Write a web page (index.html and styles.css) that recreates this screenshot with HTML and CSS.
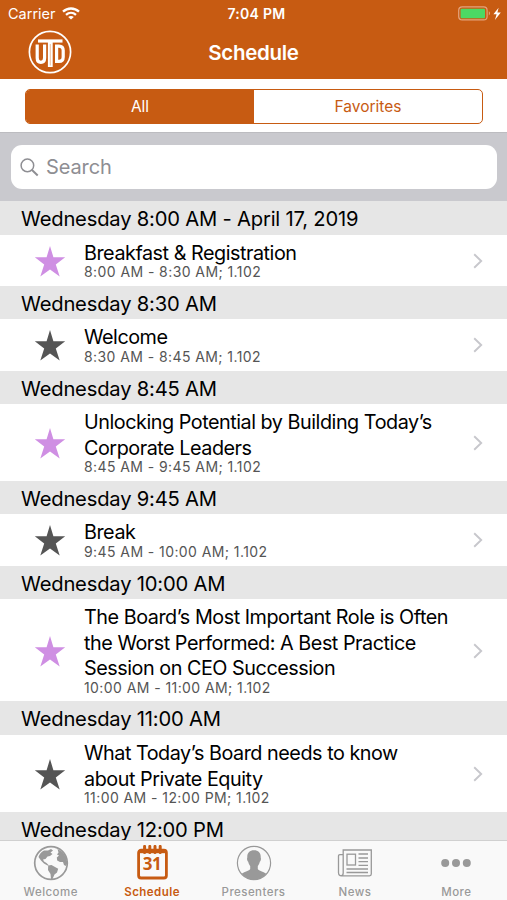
FILE: index.html
```html
<!DOCTYPE html>
<html lang="en">
  <head>
    <meta charset="UTF-8" />
    <meta name="viewport" content="width=device-width, initial-scale=1.0" />
    <title>Schedule</title>
    <link rel="stylesheet" href="styles.css">
  </head>
  <body>
    <!-- shared icons -->
    <svg class="sprite" width="0" height="0">
      <symbol id="star" viewBox="0 0 32 32">
        <path d="M16 1 L19.4 12.2 H31.2 L21.8 19.4 L25.7 31.6 L16 24.4 L6.3 31.6 L10.2 19.4 L0.8 12.2 H12.6 Z" fill="currentColor" />
      </symbol>
      <symbol id="chevron" viewBox="0 0 10 16">
        <path d="M1.2 1.2 L8.2 8 L1.2 14.8" fill="none" stroke="currentColor" stroke-width="1.9" />
      </symbol>
    </svg>

    <header class="header">
      <div class="status-bar">
        <div class="carrier">
          <span>Carrier</span>
          <svg width="18" height="13" viewBox="0 0 18 13" fill="none" stroke="#fff" stroke-width="2.3">
            <path d="M1 4.7 C5.5 0.4 12.5 0.4 17 4.7" />
            <path d="M4 7.9 C7 5.2 11 5.2 14 7.9" />
            <path d="M9 12.6 L6.2 9.9 C7.8 8.6 10.2 8.6 11.8 9.9 Z" fill="#fff" stroke="none" />
          </svg>
        </div>
        <span class="clock">7:04 PM</span>
        <div class="battery">
          <svg width="44" height="15" viewBox="0 0 44 15">
            <rect x="0.7" y="0.9" width="28.4" height="13" rx="3.5" fill="none" stroke="#e3a47d" stroke-width="1.2" />
            <rect x="2.6" y="2.8" width="24.4" height="9.4" rx="1" fill="#4cd964" />
            <path d="M30.8 5.3 C32.4 6 32.4 8.8 30.8 9.5 Z" fill="#e3a47d" />
            <path d="M40.6 1.7 L35.4 8.3 H38.6 L36.9 13.9 L42.8 6.4 H39.4 Z" fill="#fff" />
          </svg>
        </div>
      </div>
      <div class="nav-bar">
        <svg class="logo" width="44" height="44" viewBox="0 0 44 44" fill="none" stroke="#fff">
          <circle cx="22" cy="22" r="20.6" stroke-width="1.7" />
          <path d="M9.2 14.5 V28 Q9.2 32.3 12.9 32.3 Q16.6 32.3 16.6 28 V14.5" stroke-width="3.2" />
          <path d="M28.6 16.1 H31 Q35.2 16.1 35.2 20.5 V27 Q35.2 31.4 31 31.4 H28.6 Z" stroke-width="3.2" />
          <path d="M10 11 H34.5" stroke-width="3.2" />
          <path d="M22.3 11 V37" stroke-width="4.8" />
          <path d="M22.3 14 V35.5" stroke="#c75b12" stroke-width="0.4" />
        </svg>
        <h1>Schedule</h1>
      </div>
    </header>

    <div class="filter">
      <div class="segments">
        <button class="segment active">All</button>
        <button class="segment">Favorites</button>
      </div>
    </div>

    <div class="search">
      <div class="search-field">
        <svg width="19" height="19" viewBox="0 0 19 19" fill="none" stroke="#8e8e93">
          <circle cx="7.4" cy="7.4" r="6.3" stroke-width="1.5" />
          <path d="M12 12 L17.7 17.5" stroke-width="2" />
        </svg>
        <span>Search</span>
      </div>
    </div>

    <main class="schedule">
      <h2>Wednesday 8:00 AM - April 17, 2019</h2>
      <div class="session">
        <svg class="star favorite"><use href="#star" /></svg>
        <div class="details">
          <h3>Breakfast &amp; Registration</h3>
          <p>8:00 AM - 8:30 AM; 1.102</p>
        </div>
        <svg class="chevron"><use href="#chevron" /></svg>
      </div>

      <h2>Wednesday 8:30 AM</h2>
      <div class="session">
        <svg class="star"><use href="#star" /></svg>
        <div class="details">
          <h3>Welcome</h3>
          <p>8:30 AM - 8:45 AM; 1.102</p>
        </div>
        <svg class="chevron"><use href="#chevron" /></svg>
      </div>

      <h2>Wednesday 8:45 AM</h2>
      <div class="session">
        <svg class="star favorite"><use href="#star" /></svg>
        <div class="details">
          <h3>Unlocking Potential by Building Today’s<br>Corporate Leaders</h3>
          <p>8:45 AM - 9:45 AM; 1.102</p>
        </div>
        <svg class="chevron"><use href="#chevron" /></svg>
      </div>

      <h2>Wednesday 9:45 AM</h2>
      <div class="session">
        <svg class="star"><use href="#star" /></svg>
        <div class="details">
          <h3>Break</h3>
          <p>9:45 AM - 10:00 AM; 1.102</p>
        </div>
        <svg class="chevron"><use href="#chevron" /></svg>
      </div>

      <h2>Wednesday 10:00 AM</h2>
      <div class="session">
        <svg class="star favorite"><use href="#star" /></svg>
        <div class="details">
          <h3>The Board’s Most Important Role is Often<br>the Worst Performed: A Best Practice<br>Session on CEO Succession</h3>
          <p>10:00 AM - 11:00 AM; 1.102</p>
        </div>
        <svg class="chevron"><use href="#chevron" /></svg>
      </div>

      <h2>Wednesday 11:00 AM</h2>
      <div class="session">
        <svg class="star"><use href="#star" /></svg>
        <div class="details">
          <h3>What Today’s Board needs to know<br>about Private Equity</h3>
          <p>11:00 AM - 12:00 PM; 1.102</p>
        </div>
        <svg class="chevron"><use href="#chevron" /></svg>
      </div>

      <h2>Wednesday 12:00 PM</h2>
    </main>

    <nav class="tab-bar">
      <a class="tab">
        <svg width="36" height="36" viewBox="0 0 36 36">
          <circle cx="18" cy="18" r="16.3" fill="none" stroke="currentColor" stroke-width="1.7" />
          <path d="M5.5 12 C6.5 9 8 7 11 5.5 L15 5.5 L18 4 L20 5.5 L17.5 7.5 L19.5 9 L17 11 L14.5 11.5 L12.5 14 L10 14.5 L11 16.5 L13.5 18 L16 20.5 L14.5 20.5 L11 18.5 L8 15.5 Z" fill="currentColor" />
          <path d="M15.2 20.5 L18.5 20 L22 22 L25.2 23.8 L24 27.5 L21.5 29.5 L19.5 34 L18 34 L17.5 29 L15 25 Z" fill="currentColor" />
          <path d="M24.5 4 L29.5 7 L33 12 L34.3 18 L33 21 L31 20 L30 17 L27 17 L24.2 15.5 L23.8 12.5 L26 10.5 L24 9.5 L25.5 7.5 Z" fill="currentColor" />
        </svg>
        <span>Welcome</span>
      </a>
      <a class="tab active">
        <svg width="36" height="36" viewBox="0 0 36 36">
          <rect x="4.6" y="5.2" width="27.8" height="27.8" rx="2.5" fill="none" stroke="currentColor" stroke-width="2.8" />
          <path d="M4.6 5.5 H32 V8.2 H4.6 Z" fill="currentColor" />
          <path d="M10.6 1.4 V7.4 M15.8 1.4 V7.4 M21 1.4 V7.4 M26.2 1.4 V7.4" stroke="currentColor" stroke-width="3" stroke-linecap="round" />
          <text x="18" y="25.4" text-anchor="middle" class="calendar-day">31</text>
        </svg>
        <span>Schedule</span>
      </a>
      <a class="tab">
        <svg width="36" height="36" viewBox="0 0 36 36">
          <circle cx="18" cy="18" r="16.6" fill="none" stroke="currentColor" stroke-width="1.2" />
          <path d="M18 5.3 C22.5 5.3 25 8 24.7 12.5 C25.3 13.5 24.8 16 23.8 16.8 C23.3 19 22.6 20 21.8 21 V24 C23 26 27 26.5 30.3 28.7 C27.5 32.2 23 34.5 18 34.5 C13 34.5 8.5 32.2 5.7 28.7 C9 26.5 13 26 14.2 24 V21 C13.4 20 12.7 19 12.2 16.8 C11.2 16 10.7 13.5 11.3 12.5 C11 8 13.5 5.3 18 5.3 Z" fill="currentColor" />
        </svg>
        <span>Presenters</span>
      </a>
      <a class="tab">
        <svg width="36" height="36" viewBox="0 0 36 36" fill="none" stroke="currentColor" stroke-width="1.3">
          <path d="M6 9.6 H2.9 Q1.5 9.6 1.5 11 V27.5 Q1.5 30.8 4.5 30.8 H32.5 Q34.3 30.8 34.3 29 V5 H6.2 V28 Q6.2 30.8 4 30.8" />
          <rect x="10" y="9.2" width="8.5" height="10.8" />
          <path d="M21.5 9 H31 M21.5 13 H31 M21.5 16.7 H31 M21.5 20.4 H31 M9.5 24 H31 M9.5 27.5 H31" />
        </svg>
        <span>News</span>
      </a>
      <a class="tab">
        <svg width="36" height="36" viewBox="0 0 36 36" fill="currentColor">
          <circle cx="7.2" cy="18" r="4" />
          <circle cx="18" cy="18" r="4" />
          <circle cx="28.8" cy="18" r="4" />
        </svg>
        <span>More</span>
      </a>
    </nav>
  </body>
</html>
```

FILE: styles.css
```css
* {
  box-sizing: border-box;
}

body {
  margin: 0;
  height: 900px;
  display: flex;
  flex-direction: column;
  overflow: hidden;
  background-color: #fff;
  font-family: Inter, "Liberation Sans", sans-serif;
}

h1, h2, h3, p {
  margin: 0;
  font-weight: 400;
  white-space: nowrap;
}

svg {
  display: block;
  flex: none;
}

.sprite {
  position: absolute;
}

/* Header */
.header {
  flex: none;
  height: 79px;
  background-color: #c75b12;
  color: #fff;
}

.status-bar {
  display: grid;
  grid-template-columns: 1fr auto 1fr;
  align-items: center;
  height: 27px;
  padding: 0 5px 0 8px;
  font-size: 14.5px;
}

.carrier {
  display: flex;
  align-items: center;
  gap: 6px;
}

.clock {
  font-weight: 600;
  font-size: 14px;
  letter-spacing: 0.3px;
  padding-left: 3px;
}

.battery {
  justify-self: end;
}

.nav-bar {
  display: grid;
  grid-template-columns: 1fr auto 1fr;
  align-items: center;
  height: 50px;
}

.logo {
  margin-left: 28px;
}

.nav-bar h1 {
  font-size: 20.5px;
  font-weight: 600;
  letter-spacing: -0.3px;
}

/* All / Favorites switch */
.filter {
  flex: none;
  height: 53px;
  padding: 10px 24px 0 25px;
}

.segments {
  display: flex;
  height: 35px;
  border: 1.5px solid #c75b12;
  border-radius: 5px;
  overflow: hidden;
}

.segment {
  flex: 1;
  padding: 0;
  border: none;
  background: none;
  color: #c75b12;
  font-family: inherit;
  font-size: 15.5px;
}

.segment.active {
  background-color: #c75b12;
  color: #fff;
}

/* Search */
.search {
  flex: none;
  height: 69px;
  padding: 12px 10px 0 11px;
  border-top: 1px solid #bcbcc0;
  background-color: #c9c9ce;
}

.search-field {
  display: flex;
  align-items: center;
  gap: 7px;
  height: 44px;
  padding-left: 9px;
  border-radius: 11px;
  background-color: #fff;
  color: #8e8e93;
  font-size: 20px;
  letter-spacing: -0.1px;
}

/* Session list */
.schedule {
  flex: 1;
  min-height: 0;
  overflow: hidden;
}

.schedule h2 {
  height: 33.5px;
  padding-left: 21px;
  background-color: #e6e6e6;
  font-size: 20.2px;
  line-height: 35.5px;
  letter-spacing: -0.2px;
}

.session {
  display: flex;
  align-items: center;
  padding: 6.2px 24px 5.4px 34px;
}

.star {
  width: 32px;
  height: 32px;
  color: #555;
}

.star.favorite {
  color: #cf8fe3;
}

.details {
  flex: 1;
  margin-left: 18px;
}

.details h3 {
  font-size: 19.8px;
  line-height: 25.5px;
  letter-spacing: -0.47px;
}

.details p {
  padding-bottom: 1.4px;
  color: #555;
  font-size: 14px;
  line-height: 12.8px;
  letter-spacing: 0.42px;
}

.chevron {
  width: 10px;
  height: 16px;
  color: #c7c7cc;
}

/* Tab bar */
.tab-bar {
  flex: none;
  display: flex;
  height: 60px;
  border-top: 1px solid #d0d0d0;
  background-color: #f9f9f9;
}

.tab {
  flex: 1;
  display: flex;
  flex-direction: column;
  align-items: center;
  padding-top: 4px;
  color: #999;
  font-size: 11.5px;
  font-weight: 500;
  line-height: 14px;
  letter-spacing: 0.45px;
}

.tab span {
  margin-top: 4px;
}

.tab.active {
  color: #c75b12;
  font-weight: 600;
}

.calendar-day {
  fill: currentColor;
  font-family: "Open Sans", sans-serif;
  font-size: 17px;
  font-weight: 700;
  letter-spacing: -0.5px;
}
```
